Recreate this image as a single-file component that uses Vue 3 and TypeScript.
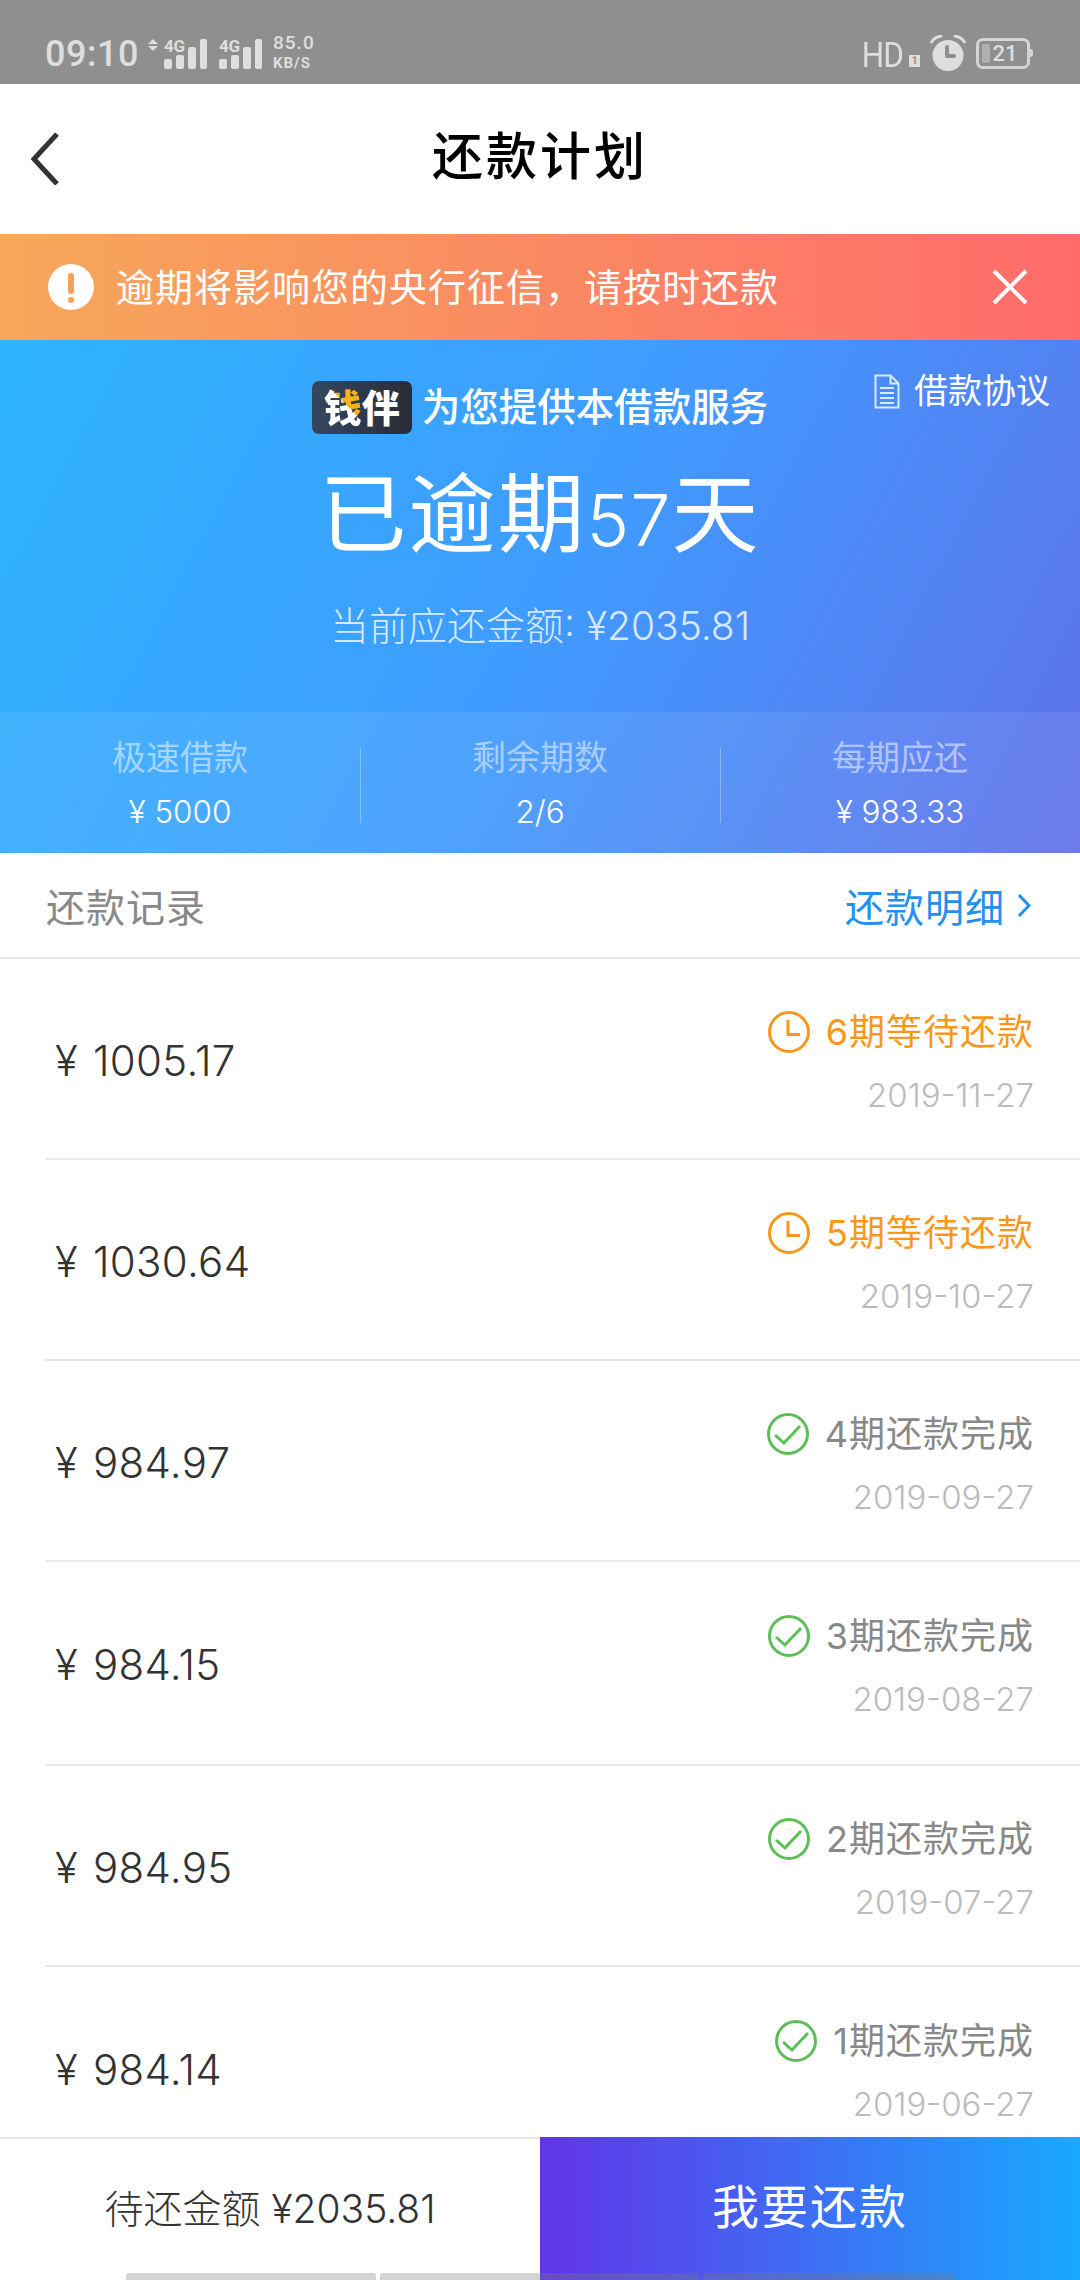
<script setup lang="ts">
interface Row { amount: string; period: string; date: string; pending: boolean; h: string }
const rows: Row[] = [
  { amount: '1005.17', period: '6期等待还款', date: '2019-11-27', pending: true, h: 'r201' },
  { amount: '1030.64', period: '5期等待还款', date: '2019-10-27', pending: true, h: 'r201' },
  { amount: '984.97', period: '4期还款完成', date: '2019-09-27', pending: false, h: 'r201' },
  { amount: '984.15', period: '3期还款完成', date: '2019-08-27', pending: false, h: 'r204' },
  { amount: '984.95', period: '2期还款完成', date: '2019-07-27', pending: false, h: 'r201' },
  { amount: '984.14', period: '1期还款完成', date: '2019-06-27', pending: false, h: 'r201' },
]
const stats = [
  { label: '极速借款', value: '¥ 5000' },
  { label: '剩余期数', value: '2/6' },
  { label: '每期应还', value: '¥ 983.33' },
]
</script>

<template>
  <div class="page">
    <div class="status">
      <div class="st-left">
        <span class="time">09:10</span>
        <span class="arrows"><i class="up"></i><i class="down"></i></span>
        <span class="sig">
          <span class="g">4G</span>
          <span class="bars"><i class="b1"></i><i class="b2"></i><i class="b3"></i><i class="b4"></i></span>
        </span>
        <span class="sig sig2">
          <span class="g">4G</span>
          <span class="bars"><i class="b1"></i><i class="b2"></i><i class="b3"></i><i class="b4"></i></span>
        </span>
        <span class="speed"><b>85.0</b><b class="kb">KB/S</b></span>
      </div>
      <div class="st-right">
        <span class="hd">HD</span><span class="one">1</span>
        <svg class="alarm" width="36" height="36" viewBox="0 0 36 36">
          <circle cx="18" cy="20.5" r="15.5" fill="#dedede" />
          <path d="M17 12v9h7" fill="none" stroke="#8f8f8f" stroke-width="4" stroke-linecap="round" stroke-linejoin="round" />
          <path d="M1.5 7 Q5 2 11 1" fill="none" stroke="#dedede" stroke-width="3" stroke-linecap="round" />
          <path d="M34.5 7 Q31 2 25 1" fill="none" stroke="#dedede" stroke-width="3" stroke-linecap="round" />
        </svg>
        <span class="batt"><i class="fill"></i><span class="bt">21</span><i class="nub"></i></span>
      </div>
    </div>

    <header class="nav">
      <svg class="back" width="32" height="52" viewBox="0 0 32 52">
        <path d="M29 1 L6 26 L29 51" fill="none" stroke="#333" stroke-width="5" />
      </svg>
      <h1 class="title">还款计划</h1>
    </header>

    <div class="banner">
      <span class="warn"><i class="wbar"></i><i class="wdot"></i></span>
      <span class="btext">逾期将影响您的央行征信，请按时还款</span>
      <svg class="close" width="36" height="36" viewBox="0 0 36 36">
        <path d="M2 2 L34 34 M34 2 L2 34" stroke="#fff" stroke-width="4" fill="none" />
      </svg>
    </div>

    <section class="hero">
      <div class="hero-main">
        <a class="agree">
          <svg width="26" height="35" viewBox="0 0 26 35">
            <path d="M1.5 1.5h15l8 8v24H1.5z" fill="none" stroke="#d8eaff" stroke-width="2" />
            <path d="M16.5 1.5v8h8M6 14h14M6 19h14M6 24h14M6 29h14" fill="none" stroke="#d8eaff" stroke-width="2" />
          </svg>
          借款协议
        </a>
        <div class="provider">
          <span class="logo"><span class="qian">钱</span><span>伴</span></span>
          <span class="ptext">为您提供本借款服务</span>
        </div>
        <div class="overdue">已逾期<span class="num">57</span>天</div>
        <div class="due">当前应还金额: ¥2035.81</div>
      </div>
      <div class="band">
        <div v-for="s in stats" :key="s.label" class="stat">
          <span class="slabel">{{ s.label }}</span>
          <span class="svalue">{{ s.value }}</span>
        </div>
      </div>
    </section>

    <div class="rec-head">
      <span class="rec-title">还款记录</span>
      <span class="rec-link">还款明细
        <svg width="14" height="25" viewBox="0 0 14 25"><path d="M2 2 L12 12.5 L2 23" fill="none" stroke="#2390ee" stroke-width="3" /></svg>
      </span>
    </div>

    <div class="list">
      <div v-for="r in rows" :key="r.period" class="row" :class="r.h">
        <div class="amount"><span class="yen">¥</span>{{ r.amount }}</div>
        <div class="right">
          <div class="state" :class="{ pending: r.pending }">
            <svg v-if="r.pending" class="ico" width="42" height="42" viewBox="0 0 42 42">
              <circle cx="21" cy="21" r="19.5" fill="none" stroke="#f7981c" stroke-width="3" />
              <path d="M20 9v14.5h12" fill="none" stroke="#f7981c" stroke-width="3" />
            </svg>
            <svg v-else class="ico" width="42" height="42" viewBox="0 0 42 42">
              <circle cx="21" cy="21" r="19.5" fill="none" stroke="#5cbf55" stroke-width="3" />
              <path d="M8 22l9 8 16-17" fill="none" stroke="#5cbf55" stroke-width="3" />
            </svg>
            <span>{{ r.period }}</span>
          </div>
          <div class="date">{{ r.date }}</div>
        </div>
      </div>
    </div>

    <footer class="foot">
      <div class="foot-left">待还金额 ¥2035.81</div>
      <div class="foot-btn">我要还款</div>
      <div class="pill">
        <i class="p1"></i><i class="p2"></i><i class="p3"></i>
      </div>
    </footer>
  </div>
</template>

<style>
html, body { margin: 0; padding: 0; background: #fff; }
</style>

<style scoped>
.page {
  width: 1080px; height: 2280px; overflow: hidden; display: flex; flex-direction: column;
  font-family: Inter, "Noto Sans CJK SC", "Noto Sans", sans-serif; background: #fff; position: relative;
}
.status {
  height: 84px; background: #8f8f8f; display: flex; justify-content: space-between; align-items: flex-end;
  padding: 0 47px 15px 45px; box-sizing: border-box; color: #dedede; font-family: Roboto, sans-serif; flex: none;
}
.st-left, .st-right { display: flex; align-items: flex-end; }
.time { font-size: 36px; line-height: 36px; font-weight: 500; letter-spacing: 0.5px; width: 103px; margin-bottom: -3px; }
.arrows { display: flex; flex-direction: column; gap: 2px; margin: 0 6px 18px 0; }
.arrows i { display: block; width: 0; height: 0; border-left: 5px solid transparent; border-right: 5px solid transparent; }
.arrows .up { border-bottom: 5px solid #dedede; }
.arrows .down { border-top: 5px solid #dedede; }
.sig { position: relative; width: 43px; height: 30px; }
.sig2 { margin-left: 12px; }
.g { position: absolute; left: 0; top: 0; font-size: 17px; line-height: 14px; font-weight: 700; letter-spacing: -0.3px; }
.bars { position: absolute; inset: 0; }
.bars i { position: absolute; bottom: 0; width: 8px; background: #dedede; border-radius: 2px; }
.b1 { left: 0; height: 10px; } .b2 { left: 12px; height: 14px; } .b3 { left: 24px; height: 22px; } .b4 { left: 36px; height: 30px; width: 7px !important; }
.speed { display: flex; flex-direction: column; margin-left: 11px; margin-bottom: -2px; line-height: 1; }
.speed b { font-size: 19px; font-weight: 500; line-height: 19px; letter-spacing: 1px; }
.speed .kb { font-size: 15px; line-height: 16px; font-weight: 700; letter-spacing: 1px; margin-top: 3px; }
.hd { display: block; width: 41px; font-size: 35px; line-height: 26px; font-weight: 400; letter-spacing: -1px; white-space: nowrap; direction: rtl; transform: scaleX(0.9); transform-origin: right center; }
.one { width: 11px; height: 12px; background: #dedede; color: #8f8f8f; font-size: 10px; line-height: 12px; text-align: center; border-radius: 1px; font-weight: 700; margin: 0 10px 2px 6px; }
.alarm { margin-bottom: -2px; }
.batt { position: relative; width: 48px; height: 25px; border: 3px solid #d4d4d4; border-radius: 7px; margin-left: 10px; margin-right: 3px; display: flex; align-items: center; justify-content: center; }
.batt .fill { position: absolute; left: 3px; top: 3px; bottom: 3px; width: 8px; background: #b0b0b0; border-radius: 2px; }
.bt { position: relative; font-size: 22px; font-weight: 500; line-height: 1; padding-left: 4px; }
.batt .nub { position: absolute; right: -6px; top: 8px; width: 3px; height: 8px; background: #d4d4d4; border-radius: 0 3px 3px 0; }

.nav { height: 150px; flex: none; display: flex; align-items: center; justify-content: center; position: relative; background: #fff; }
.back { position: absolute; left: 28px; top: 49px; }
.title { margin: 0 0 6px; font-size: 51px; font-weight: 500; color: #000; letter-spacing: 3px; line-height: 1; }

.banner {
  height: 106px; flex: none; display: flex; align-items: center; padding: 0 52px 0 48px;
  background: linear-gradient(90deg, #f6a85a, #ff6b6b); color: #fff; position: relative;
}
.warn { width: 46px; height: 46px; border-radius: 50%; background: #fff; position: relative; flex: none; margin-right: 22px; }
.wbar { position: absolute; left: 20px; top: 9px; width: 6px; height: 21px; background: #f6a05a; border-radius: 3px; }
.wdot { position: absolute; left: 20px; top: 33px; width: 6px; height: 6px; background: #f6a05a; border-radius: 50%; }
.btext { font-size: 38px; letter-spacing: 1px; white-space: nowrap; flex: 1; line-height: 1; }
.close { flex: none; }

.hero { background: linear-gradient(118deg, #2db4fd 0%, #3f9cff 50%, #6070ea 100%); color: #fff; display: flex; flex-direction: column; height: 513px; flex: none; }
.hero-main { height: 372px; position: relative; box-sizing: border-box; padding-top: 41px; text-align: center; }
.agree { position: absolute; right: 30px; top: 28px; display: flex; align-items: center; gap: 14px; font-size: 34px; line-height: 46px; color: #fff; }
.provider { display: flex; align-items: center; justify-content: center; height: 53px; gap: 10px; }
.logo { width: 100px; height: 53px; border-radius: 7px; background: linear-gradient(90deg, #33475f, #2b2b38); display: flex; align-items: center; justify-content: center; font-size: 38px; font-weight: 900; color: #fff; line-height: 1; box-sizing: border-box; }
.qian { background: linear-gradient(45deg, #fff 58%, #f5b21b 58%); -webkit-background-clip: text; background-clip: text; color: transparent; }
.ptext { font-size: 38.5px; font-weight: 500; color: #fff; line-height: 1; }
.overdue { font-size: 87px; line-height: 100px; margin-top: 31px; letter-spacing: 2px; font-weight: 400; }
.num { font-size: 72px; font-weight: 300; letter-spacing: 1px; }
.due { font-size: 39px; line-height: 50px; margin-top: 31px; color: #d6e8ff; font-weight: 300; }

.band { height: 141px; background: rgba(255,255,255,0.08); display: grid; grid-template-columns: repeat(3, 1fr); }
.stat { display: flex; flex-direction: column; align-items: center; padding-top: 24px; position: relative; box-sizing: border-box; }
.stat + .stat::before { content: ""; position: absolute; left: 0; top: 36px; bottom: 30px; width: 1px; background: rgba(255,255,255,0.3); }
.slabel { font-size: 34px; line-height: 44px; color: rgba(255,255,255,0.5); }
.svalue { font-size: 31.5px; line-height: 38px; margin-top: 13px; font-weight: 300; color: #fff; }

.rec-head { border-bottom: 2px solid #e6e6e6; display: flex; align-items: center; justify-content: space-between; padding: 0 49px 0 46px; box-sizing: border-box; flex: none; height: 106px; }
.rec-title { font-size: 39px; color: #888; letter-spacing: 1px; }
.rec-link { font-size: 39px; color: #2390ee; letter-spacing: 1px; display: flex; align-items: center; gap: 12px; }

.list { flex: 1; overflow: hidden; }
.row { display: flex; justify-content: space-between; align-items: center; box-sizing: border-box; margin-left: 45px; padding: 0 46px 0 10px; border-bottom: 2px solid #e8e8e8; position: relative; }
.r201 { height: 201px; }
.r204 { height: 204px; }
.row:last-child { border-bottom: 0; }
.amount { font-size: 42px; color: #333; font-weight: 300; line-height: 1; margin-top: 4px; letter-spacing: 0.3px; }
.yen { margin-right: 15px; }
.right { display: flex; flex-direction: column; align-items: flex-end; gap: 21px; padding-top: 7px; }
.state { display: flex; align-items: center; gap: 16px; font-size: 36px; color: #888; line-height: 44px; letter-spacing: 1px; }
.state.pending { color: #f7981c; }
.date { font-size: 33px; color: #bbb; line-height: 40px; font-weight: 300; }

.foot { height: 143px; flex: none; display: grid; grid-template-columns: 540px 540px; border-top: 2px solid #e8e8e8; box-sizing: border-box; position: relative; }
.foot-left { display: flex; align-items: center; justify-content: center; font-size: 39px; color: #333; font-weight: 300; padding-bottom: 8px; }
.foot-btn { display: flex; align-items: center; justify-content: center; font-size: 47px; color: #fff; background: linear-gradient(90deg, #6134e8, #1aa8ff); letter-spacing: 2px; padding-bottom: 10px; margin-top: -2px; }
.pill { position: absolute; left: 126px; bottom: 0; width: 828px; height: 7px; display: flex; gap: 4px; }
.pill i { display: block; height: 7px; background: rgba(120,120,120,0.33); border-radius: 3px 3px 0 0; }
.p1 { width: 250px; } .p2 { width: 319px; } .p3 { width: 251px; }
</style>
